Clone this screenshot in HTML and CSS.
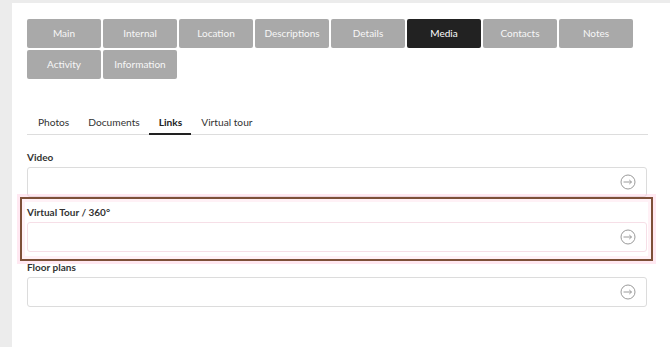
FILE: index.html
```html
<!DOCTYPE html>
<html lang="en">

<head>
    <meta charset="UTF-8">
    <meta name="viewport" content="width=device-width, initial-scale=1.0">
    <title>Media - Links</title>
    <link rel="stylesheet" href="styles.css">
</head>

<body>
    <section class="panel">
        <ul class="mainTabs">
            <li>Main</li>
            <li>Internal</li>
            <li>Location</li>
            <li>Descriptions</li>
            <li>Details</li>
            <li class="active">Media</li>
            <li>Contacts</li>
            <li>Notes</li>
            <li>Activity</li>
            <li>Information</li>
        </ul>

        <ul class="subTabs">
            <li>Photos</li>
            <li>Documents</li>
            <li class="active">Links</li>
            <li>Virtual tour</li>
        </ul>

        <div class="field">
            <label>Video</label>
            <div class="inputBox">
                <input type="text">
                <svg class="go" width="16" height="16" viewBox="0 0 16 16"><circle cx="8" cy="8" r="7" /><path d="M3.5 8h8M9.3 6l2.2 2-2.2 2" /></svg>
            </div>
        </div>
        <div class="field marked">
            <label>Virtual Tour / 360°</label>
            <div class="inputBox">
                <input type="text">
                <svg class="go" width="16" height="16" viewBox="0 0 16 16"><circle cx="8" cy="8" r="7" /><path d="M3.5 8h8M9.3 6l2.2 2-2.2 2" /></svg>
            </div>
        </div>
        <div class="field">
            <label>Floor plans</label>
            <div class="inputBox">
                <input type="text">
                <svg class="go" width="16" height="16" viewBox="0 0 16 16"><circle cx="8" cy="8" r="7" /><path d="M3.5 8h8M9.3 6l2.2 2-2.2 2" /></svg>
            </div>
        </div>
    </section>
</body>

</html>
```

FILE: styles.css
```css
body,
div,
ul,
li,
label,
input {
    padding: 0;
    margin: 0;
    list-style: none;
    border: none;
    box-sizing: border-box;
    font-family: Lato, "Open Sans", sans-serif;
}

html,
body {
    font-size: 12px;
    background: #ececec;
}

body {
    padding: 3px 0 0 12px;
}

.panel {
    width: 651px;
    height: 341px;
    background: #fff;
    padding: 16px 15px 0 15px;
}

.mainTabs {
    display: flex;
    flex-wrap: wrap;
    gap: 2px;
    width: 610px;
}

.mainTabs li {
    width: 74px;
    height: 29px;
    line-height: 29px;
    text-align: center;
    background: #a9a9a9;
    color: #f7f7f7;
    font-size: 10px;
    border-radius: 2px;
}

.mainTabs li.active {
    background: #222;
    color: #fff;
}

.subTabs {
    display: flex;
    margin-top: 32px;
    padding-left: 1px;
    border-bottom: 1px solid #ddd;
    width: 621px;
}

.subTabs li {
    padding: 0 9px 0 10px;
    height: 24px;
    line-height: 23px;
    font-size: 10.2px;
    color: #333;
    border-bottom: 2px solid transparent;
    margin-bottom: -1px;
}

.subTabs li.active {
    font-weight: bold;
    color: #222;
    border-bottom-color: #222;
}

.field {
    width: 620px;
    margin-top: 15px;
}

.field + .field {
    margin-top: 8px;
}

.field label {
    display: block;
    height: 14px;
    line-height: 14px;
    margin-bottom: 3px;
    font-size: 10px;
    font-weight: bold;
    color: #333;
}

.inputBox {
    display: flex;
    align-items: center;
    height: 30px;
    border: 1px solid #dcdcdc;
    border-radius: 3px;
    background: #fff;
}

.inputBox input {
    flex: 1;
    height: 28px;
    background: transparent;
    outline: none;
}

.go {
    margin-right: 10px;
    fill: none;
    stroke: #9a9a9a;
    stroke-width: 1;
}

.marked {
    position: relative;
}

.marked .inputBox {
    border-color: #f6dfe7;
}

.marked:after {
    content: '';
    position: absolute;
    top: -8px;
    bottom: -9px;
    left: -7px;
    right: -6px;
    border: 2px solid #7d5038;
    box-shadow: 0 0 0 3px rgba(255, 205, 225, 0.45), inset 0 0 0 3px rgba(255, 215, 230, 0.35);
    pointer-events: none;
}
```
